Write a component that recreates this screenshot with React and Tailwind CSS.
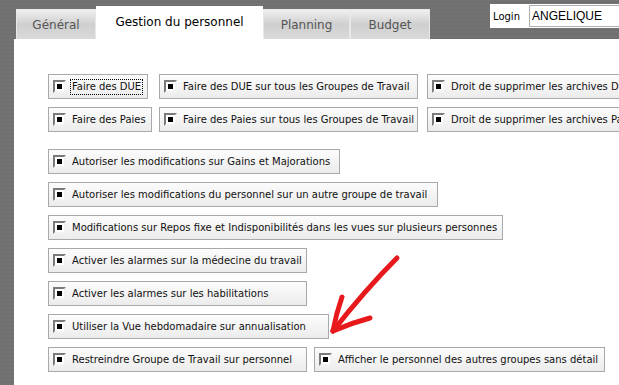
import React from 'react';

// Case à cocher façon Windows classique (cochée)
function CheckMark() {
  return (
    <div className="w-[13px] h-[13px] shrink-0 border-2 border-t-[#7a7a7a] border-l-[#7a7a7a] border-r-[#f2f2f2] border-b-[#f2f2f2] bg-white flex items-center justify-center">
      <div className="w-[5px] h-[5px] bg-black" />
    </div>
  );
}

function Option({ label, className = '', focus = false }) {
  return (
    <div className={`flex items-center h-[25px] shrink-0 border border-[#a9a9a9] bg-gradient-to-b from-[#fcfcfc] to-[#ececec] pl-[4px] whitespace-nowrap overflow-hidden ${className}`}>
      <CheckMark />
      <span
        className={`ml-[5px] text-[10px] leading-[14px] text-[#111] px-[1px] ${focus ? 'outline outline-1 outline-dotted outline-black' : ''}`}
      >
        {label}
      </span>
    </div>
  );
}

function Tab({ label, active = false, className = '' }) {
  if (active) {
    return (
      <div className={`h-[33px] bg-white flex items-center justify-center pb-[2px] text-[12px] text-black ${className}`}>
        {label}
      </div>
    );
  }
  return (
    <div className={`h-[30px] bg-gradient-to-b from-[#f0f0f0] via-[#cfcfcf] to-[#dadada] border-t border-l border-r border-[#e8e8e8] flex items-center justify-center text-[12px] text-[#555] ${className}`}>
      {label}
    </div>
  );
}

function App() {
  return (
    <div className="relative w-[619px] h-[385px] overflow-hidden bg-[repeating-linear-gradient(180deg,#6c6c6c_0px,#7a7a7a_1px,#676767_2px,#767676_3px,#707070_4px)] font-['DejaVu_Sans',sans-serif]">
      {/* Barre d'onglets */}
      <div className="flex items-end h-[39px]">
        <div className="flex items-end ml-[16px]">
          <Tab label="Général" className="w-[80px]" />
          <Tab label="Gestion du personnel" active className="w-[167px]" />
          <Tab label="Planning" className="w-[87px]" />
          <Tab label="Budget" className="w-[80px]" />
        </div>
        <div className="self-start mt-[4px] ml-auto w-[129px] h-[24px] bg-white flex items-center pl-[3px]">
          <span className="text-[10px] text-black">Login</span>
          <div className="ml-[9px] flex-1 h-[22px] border border-[#b0b0b0] border-r-0 flex items-center pl-[2px] font-['Liberation_Sans',Arial,sans-serif] text-[12px] text-black">
            ANGELIQUE
          </div>
        </div>
      </div>

      {/* Contenu */}
      <div className="ml-[14px] h-[346px] bg-white overflow-hidden pt-[35px] pl-[34px]">
        <div className="grid grid-cols-[111px_268px_240px] gap-y-[8px]">
          <Option label="Faire des DUE" focus className="w-[100px]" />
          <Option label="Faire des DUE sur tous les Groupes de Travail" className="w-[259px]" />
          <Option label="Droit de supprimer les archives DUE" className="w-[240px]" />
          <Option label="Faire des Paies" className="w-[104px]" />
          <Option label="Faire des Paies sur tous les Groupes de Travail" className="w-[259px]" />
          <Option label="Droit de supprimer les archives Paies" className="w-[240px]" />
        </div>

        <div className="flex flex-col gap-[8px] mt-[17px]">
          <Option label="Autoriser les modifications sur Gains et Majorations" className="w-[292px]" />
          <Option label="Autoriser les modifications du personnel sur un autre groupe de travail" className="w-[390px]" />
          <Option label="Modifications sur Repos fixe et Indisponibilités dans les vues sur plusieurs personnes" className="w-[455px]" />
          <Option label="Activer les alarmes sur la médecine du travail" className="w-[259px]" />
          <Option label="Activer les alarmes sur les habilitations" className="w-[259px]" />
          <Option label="Utiliser la Vue hebdomadaire sur annualisation" className="w-[281px]" />
          <div className="flex gap-[7px]">
            <Option label="Restreindre Groupe de Travail sur personnel" className="w-[259px]" />
            <Option label="Afficher le personnel des autres groupes sans détail" className="w-[291px]" />
          </div>
        </div>
      </div>

      {/* Flèche rouge annotée */}
      <svg className="absolute left-[320px] top-[250px]" width="90" height="95" viewBox="0 0 90 95">
        <g stroke="#e8191c" strokeWidth="5" strokeLinecap="round" strokeLinejoin="round" fill="none">
          <path d="M77 8 Q45 40 13 81" />
          <path d="M13 81 Q16 64 22 47" />
          <path d="M13 81 Q31 73 50 68" />
        </g>
      </svg>
    </div>
  );
}

export default App;
